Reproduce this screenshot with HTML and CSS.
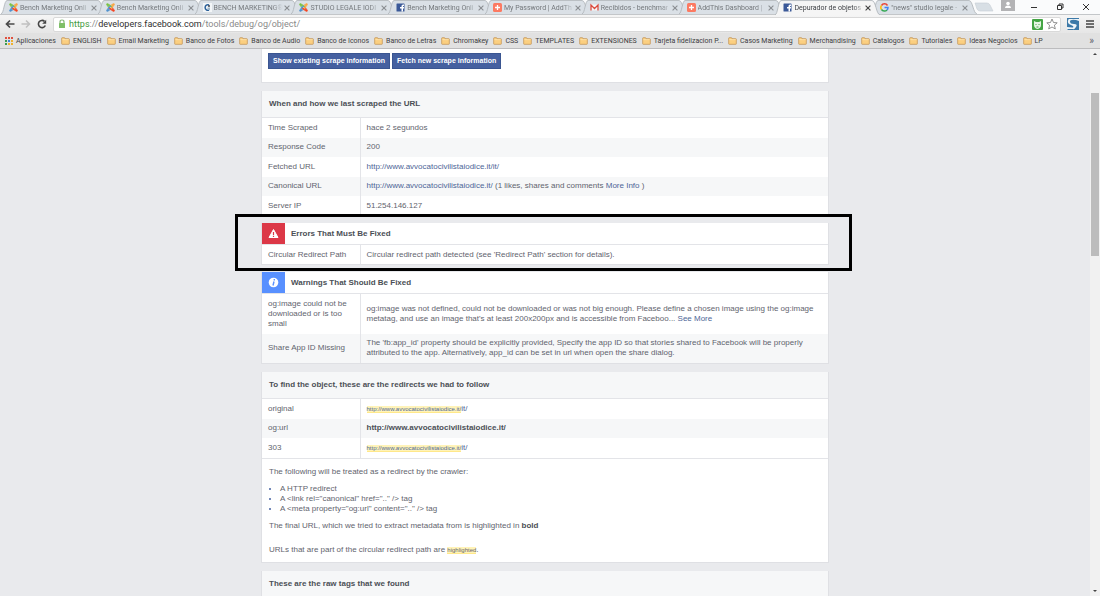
FILE: index.html
```html
<!DOCTYPE html>
<html lang="es">
<head>
<meta charset="utf-8">
<title>Depurador de objetos</title>
<link rel="stylesheet" href="styles.css">
</head>
<body>
<svg class="defs" aria-hidden="true">
  <symbol id="joomla" viewBox="0 0 18 18">
    <path d="M5 8Q3 6 4.500 4.500T8 5l4 4" fill="none" stroke="#7ac143" stroke-width="2.600"/>
    <path d="M10 5q2-2 3.500-.5T13 8l-4 4" fill="none" stroke="#f9a541" stroke-width="2.600"/>
    <path d="M13 10q2 2 .5 3.500T10 13L6 9" fill="none" stroke="#f44321" stroke-width="2.600"/>
    <path d="M8 13q-2 2-3.500.5T5 10l4-4" fill="none" stroke="#5091cd" stroke-width="2.600"/>
    <circle cx="3" cy="3" r="2.400" fill="#7ac143"/><circle cx="15" cy="3" r="2.400" fill="#f9a541"/>
    <circle cx="15" cy="15" r="2.400" fill="#f44321"/><circle cx="3" cy="15" r="2.400" fill="#5091cd"/>
  </symbol>
  <symbol id="fb" viewBox="0 0 18 18">
    <rect x="1" y="1" width="16" height="16" rx="1" fill="#3b5998"/>
    <path d="M11 17v-6H8V8h3V6q0-3 3-3h2v3h-1q-1 0-1 1v1h2v3h-2v6z" fill="#fff"/>
  </symbol>
  <symbol id="addthis" viewBox="0 0 18 18">
    <rect width="18" height="18" rx="3" fill="#fc7a62"/>
    <path d="M9 4v10M4 9h10" stroke="#fff" stroke-width="2.6"/>
  </symbol>
  <symbol id="gmail" viewBox="0 0 18 18">
    <path d="M1 3h16v12H1z" fill="#f5f5f5"/>
    <path d="M2 15V4l7 7 7-7v11" fill="none" stroke="#db4a3d" stroke-width="2.6"/>
  </symbol>
  <symbol id="bench" viewBox="0 0 18 18">
    <rect width="18" height="18" fill="#f3f6f8"/>
    <path d="M12 4A5.500 5.500 0 1 0 12 14" fill="none" stroke="#2a6099" stroke-width="3"/>
    <circle cx="12" cy="6" r="2" fill="#3c4350"/><path d="M9 9h5v5H9z" fill="#9db7cb"/>
  </symbol>
  <symbol id="google" viewBox="0 0 18 18">
    <g fill="none" stroke-width="3"><path d="M15 5A7 7 0 0 0 3 5" stroke="#ea4335"/><path d="M3 5a7 7 0 0 0 0 8" stroke="#fbbc05"/><path d="M3 13a7 7 0 0 0 11 1" stroke="#34a853"/><path d="M14 14q2-2 2-5H9" stroke="#4285f4"/></g>
  </symbol>
  <symbol id="close" viewBox="0 0 10 10"><path d="M2 2l6 6M8 2L2 8" stroke="currentColor" stroke-width="1.400"/></symbol>
  <symbol id="tab" viewBox="0 0 105 14" preserveAspectRatio="none">
    <path d="M0 14C3 13 3 1 6 .5H97C101 1 101 13 105 14" fill="currentColor" stroke="#adb3b8" stroke-width=".8"/>
  </symbol>
  <symbol id="folder" viewBox="0 0 27 24">
    <path d="M2 20V4q0-2 2-2h6q2 0 2 3h11q2 0 2 2v13q0 2-2 2H4q-2 0-2-2z" fill="#fbcf80" stroke="#bd8b4a" stroke-width="2"/>
    <path d="M4 8h19" stroke="#ffecbc" stroke-width="2"/>
  </symbol>
</svg>

<header class="browser">
  <div class="tabstrip">
    <nav class="tabs" aria-label="Pestañas">
      <div class="tab"><svg class="shape"><use href="#tab"/></svg><svg class="fav"><use href="#joomla"/></svg><span>Bench Marketing Onli</span><button aria-label="Cerrar"><svg><use href="#close"/></svg></button></div>
      <div class="tab"><svg class="shape"><use href="#tab"/></svg><svg class="fav"><use href="#joomla"/></svg><span>Bench Marketing Onli</span><button aria-label="Cerrar"><svg><use href="#close"/></svg></button></div>
      <div class="tab"><svg class="shape"><use href="#tab"/></svg><svg class="fav"><use href="#bench"/></svg><span>BENCH MARKETING®</span><button aria-label="Cerrar"><svg><use href="#close"/></svg></button></div>
      <div class="tab"><svg class="shape"><use href="#tab"/></svg><svg class="fav"><use href="#joomla"/></svg><span>STUDIO LEGALE IODI</span><button aria-label="Cerrar"><svg><use href="#close"/></svg></button></div>
      <div class="tab"><svg class="shape"><use href="#tab"/></svg><svg class="fav"><use href="#fb"/></svg><span>Bench Marketing Onli</span><button aria-label="Cerrar"><svg><use href="#close"/></svg></button></div>
      <div class="tab"><svg class="shape"><use href="#tab"/></svg><svg class="fav"><use href="#addthis"/></svg><span>My Password | AddTh</span><button aria-label="Cerrar"><svg><use href="#close"/></svg></button></div>
      <div class="tab"><svg class="shape"><use href="#tab"/></svg><svg class="fav"><use href="#gmail"/></svg><span>Recibidos - benchmar</span><button aria-label="Cerrar"><svg><use href="#close"/></svg></button></div>
      <div class="tab"><svg class="shape"><use href="#tab"/></svg><svg class="fav"><use href="#addthis"/></svg><span>AddThis Dashboard |</span><button aria-label="Cerrar"><svg><use href="#close"/></svg></button></div>
      <div class="tab active"><svg class="shape"><use href="#tab"/></svg><svg class="fav"><use href="#fb"/></svg><span>Depurador de objetos</span><button aria-label="Cerrar"><svg><use href="#close"/></svg></button></div>
      <div class="tab"><svg class="shape"><use href="#tab"/></svg><svg class="fav"><use href="#google"/></svg><span>"news" studio legale -</span><button aria-label="Cerrar"><svg><use href="#close"/></svg></button></div>
    </nav>
    <button class="newtab" aria-label="Nueva pestaña"><svg viewBox="0 0 20 10"><path d="M1 1h12q2 0 3 2l3 6H6Q4 9 3 7z" fill="#d8dfe5" stroke="#c8ced3" stroke-width=".6"/></svg></button>
    <div class="window">
      <button class="user" aria-label="Usuario"><svg viewBox="0 0 14 11"><circle cx="7" cy="3.500" r="1.800" fill="#fff"/><path d="M4 8q0-2.500 3-2.500T10 8z" fill="#fff"/></svg></button>
      <button aria-label="Minimizar"><svg viewBox="0 0 14 14"><path d="M4 7.500h6" stroke="#333"/></svg></button>
      <button aria-label="Restaurar"><svg viewBox="0 0 14 14"><path d="M4.500 5.500h4v4h-4zM6 5V4h4v4H9" fill="none" stroke="#333"/></svg></button>
      <button aria-label="Cerrar ventana"><svg viewBox="0 0 14 14"><path d="M4 4l6 6M10 4l-6 6" stroke="#333"/></svg></button>
    </div>
  </div>
  <div class="toolbar">
    <button aria-label="Atrás"><svg viewBox="0 0 10 10"><path d="M9.500 5H1.500M5 1.500L1.500 5 5 8.500" fill="none" stroke="#4a4a4a" stroke-width="1.700"/></svg></button>
    <button aria-label="Adelante"><svg viewBox="0 0 10 10"><path d="M.5 5h8M5 1.500L8.500 5 5 8.500" fill="none" stroke="#c0c0c0" stroke-width="1.600"/></svg></button>
    <button aria-label="Recargar"><svg viewBox="0 0 10 10"><path d="M8.300 6.500A3.600 3.600 0 1 1 7.500 2.400" fill="none" stroke="#444" stroke-width="1.600"/><path d="M9.200.7v4H5.200z" fill="#444"/></svg></button>
    <div class="omnibox">
      <svg class="lock" viewBox="0 0 8 10"><path d="M2 5V3q0-2 2-2t2 2v2" fill="none" stroke="#86b878" stroke-width="1.200"/><rect x="1" y="4" width="6" height="5" rx=".5" fill="#7fbf68"/></svg>
      <p class="url"><span class="secure">https</span>://<b>developers.facebook.com</b>/tools/debug/og/object/</p>
      <svg class="shield" viewBox="0 0 11 11"><rect width="11" height="11" rx="1" fill="#45a545"/><path d="M2 2l2 1h3l2-1v4Q9 9 5.500 10 2 9 2 6z" fill="#e6f5e4"/><path d="M3.500 5l1 1M7.500 5l-1 1M4.500 8h2" stroke="#45a545"/></svg>
      <svg class="star" viewBox="0 0 12 12"><path d="M6 1l1.500 3.500 3.700.3-2.800 2.400.9 3.700L6 9l-3.300 1.900.9-3.700L.8 4.800l3.700-.3z" fill="#fff" stroke="#777" stroke-width=".8"/></svg>
    </div>
    <button aria-label="Extensión"><svg class="ext" viewBox="0 0 12 12"><rect width="12" height="12" fill="#3c79a8"/><path d="M12 0v3L9 2Q3 1 3 3.500T7 6t2 3-3 2H1l-1 1V9l5 .5Q7 9.500 6 8L2 6Q0 4 1.500 1.500L2 0z" fill="#eef4f8"/><path d="M0 0h12v1H0z" fill="#3c79a8"/></svg></button>
    <button class="menu" aria-label="Menú"><svg viewBox="0 0 10 10"><path d="M1 2h8M1 5h8M1 8h8" stroke="#444" stroke-width="1.600"/></svg></button>
  </div>
  <nav class="bookmarks" aria-label="Marcadores">
    <a href="#"><svg class="apps" viewBox="0 0 8 8"><path d="M0 0h2v2H0zM3 0h2v2H3zM6 0h2v2H6z" fill="#e0503e"/><path d="M0 3h2v2H0z" fill="#3b9a50"/><path d="M3 3h2v2H3z" fill="#4280df"/><path d="M6 3h2v2H6zM3 6h2v2H3zM6 6h2v2H6z" fill="#eeb12f"/><path d="M0 6h2v2H0z" fill="#3b9a50"/></svg>Aplicaciones</a>
    <a href="#"><svg><use href="#folder"/></svg>ENGLISH</a>
    <a href="#"><svg><use href="#folder"/></svg>Email Marketing</a>
    <a href="#"><svg><use href="#folder"/></svg>Banco de Fotos</a>
    <a href="#"><svg><use href="#folder"/></svg>Banco de Audio</a>
    <a href="#"><svg><use href="#folder"/></svg>Banco de Iconos</a>
    <a href="#"><svg><use href="#folder"/></svg>Banco de Letras</a>
    <a href="#"><svg><use href="#folder"/></svg>Chromakey</a>
    <a href="#"><svg><use href="#folder"/></svg>CSS</a>
    <a href="#"><svg><use href="#folder"/></svg>TEMPLATES</a>
    <a href="#"><svg><use href="#folder"/></svg>EXTENSIONES</a>
    <a href="#"><svg><use href="#folder"/></svg>Tarjeta fidelizacion P...</a>
    <a href="#"><svg><use href="#folder"/></svg>Casos Marketing</a>
    <a href="#"><svg><use href="#folder"/></svg>Merchandising</a>
    <a href="#"><svg><use href="#folder"/></svg>Catalogos</a>
    <a href="#"><svg><use href="#folder"/></svg>Tutoriales</a>
    <a href="#"><svg><use href="#folder"/></svg>Ideas Negocios</a>
    <a href="#"><svg><use href="#folder"/></svg>LP</a>
    <button class="more" aria-label="Más marcadores">»</button>
  </nav>
</header>

<div class="viewport">
  <main class="page">
    <section class="card actions">
      <button>Show existing scrape information</button>
      <button>Fetch new scrape information</button>
    </section>

    <section class="card scraped">
      <h2>When and how we last scraped the URL</h2>
      <table>
        <tr><th scope="row">Time Scraped</th><td>hace 2 segundos</td></tr>
        <tr><th scope="row">Response Code</th><td>200</td></tr>
        <tr><th scope="row">Fetched URL</th><td><a href="#">http://www.avvocatocivilistaiodice.it/it/</a></td></tr>
        <tr><th scope="row">Canonical URL</th><td><a href="#">http://www.avvocatocivilistaiodice.it/</a> (1 likes, shares and comments <a href="#">More Info</a> )</td></tr>
        <tr><th scope="row">Server IP</th><td>51.254.146.127</td></tr>
      </table>
    </section>

    <div class="callout">
      <section class="card">
        <h3><svg class="badge error" viewBox="0 0 23 21"><path d="M11.500 6.500L16 14.500H7z" fill="#fff" stroke="#fff" stroke-linejoin="round"/><path d="M11.500 9v3M11.500 12.800v1.200" stroke="#dc3847" stroke-width="1.200"/></svg>Errors That Must Be Fixed</h3>
        <table>
          <tr><th scope="row">Circular Redirect Path</th><td>Circular redirect path detected (see 'Redirect Path' section for details).</td></tr>
        </table>
      </section>
    </div>

    <section class="card">
      <h3><svg class="badge info" viewBox="0 0 23 21"><circle cx="11.500" cy="10.500" r="4.800" fill="#fff"/><path d="M12.300 7v1.500M12 9.500l-1 4" stroke="#5890ff" stroke-width="1.400"/></svg>Warnings That Should Be Fixed</h3>
      <table>
        <tr><th scope="row">og:image could not be downloaded or is too small</th><td>og:image was not defined, could not be downloaded or was not big enough. Please define a chosen image using the og:image metatag, and use an image that's at least 200x200px and is accessible from Faceboo... <a href="#">See More</a></td></tr>
        <tr><th scope="row">Share App ID Missing</th><td>The 'fb:app_id' property should be explicitly provided, Specify the app ID so that stories shared to Facebook will be properly attributed to the app. Alternatively, app_id can be set in url when open the share dialog.</td></tr>
      </table>
    </section>

    <section class="card">
      <h2>To find the object, these are the redirects we had to follow</h2>
      <table>
        <tr><th scope="row">original</th><td><a href="#"><mark>http://www.avvocatocivilistaiodice.it/</mark>it/</a></td></tr>
        <tr><th scope="row">og:url</th><td><strong>http://www.avvocatocivilistaiodice.it/</strong></td></tr>
        <tr><th scope="row">303</th><td><a href="#"><mark>http://www.avvocatocivilistaiodice.it/</mark>it/</a></td></tr>
      </table>
      <div class="notes">
        <p>The following will be treated as a redirect by the crawler:</p>
        <ul>
          <li>A HTTP redirect</li>
          <li>A &lt;link rel="canonical" href=".." /&gt; tag</li>
          <li>A &lt;meta property="og:url" content=".." /&gt; tag</li>
        </ul>
        <p>The final URL, which we tried to extract metadata from is highlighted in <strong>bold</strong></p>
        <p class="last">URLs that are part of the circular redirect path are <mark>highlighted</mark>.</p>
      </div>
    </section>

    <section class="card">
      <h2>These are the raw tags that we found</h2>
    </section>
  </main>
  <div class="scrollbar" aria-hidden="true">
    <svg viewBox="0 0 10 10"><path d="M3 6l2-2 2 2z" fill="#444"/></svg>
    <div class="track"><div class="thumb"></div></div>
    <svg viewBox="0 0 10 10"><path d="M3 4h4L5 6z" fill="#444"/></svg>
  </div>
</div>
</body>
</html>
```
FILE: styles.css
```css
* { box-sizing: border-box; }
body {
  margin: 0;
  height: 100vh;
  display: flex;
  flex-direction: column;
  overflow: hidden;
  font: 8px/10px "Liberation Sans", Arial, sans-serif;
  color: #5f646e;
}
button { margin: 0; padding: 0; border: 0; background: none; font: inherit; color: inherit; }
a { color: #4d6697; text-decoration: none; }
svg { display: block; flex: none; }
.defs { position: absolute; width: 0; height: 0; }

/* Browser frame */
.browser { flex: none; font-family: Roboto, "Open Sans", sans-serif; font-size: 7px; background: #e1e1e1; border-bottom: 1px solid #bcbcbe; }
.tabstrip { display: flex; height: 15px; background: #fafbfc; border-bottom: 1px solid #c3c6c9; }
.tabs { display: grid; grid-template-columns: repeat(10, 1fr); width: 88%; color: #74787c; }
.tab { position: relative; display: flex; align-items: center; gap: 2px; min-width: 0; height: 15px; padding-left: 9px; }
.tab .shape { position: absolute; left: 1px; top: 0; width: 105px; height: 14px; color: #dae0e6; }
.tab .fav { position: relative; width: 9px; height: 9px; }
.tab span { position: relative; flex: 1; overflow: hidden; white-space: nowrap; mask-image: linear-gradient(90deg, #000 85%, transparent); }
.tab button { position: relative; width: 8px; margin: 0 -1px 0 -2px; color: #8b8f93; }
.tab button svg { width: 8px; height: 8px; }
.tab.active { z-index: 1; color: #404347; }
.tab.active .shape { color: #f5f5f5; height: 15px; }
.tab.active button { color: #444; }
.newtab { width: 20px; margin-left: 6px; }
.newtab svg { width: 20px; height: 10px; }
.window { display: flex; flex: 1; justify-content: flex-end; gap: 12px; padding-right: 7px; }
.window svg { width: 14px; height: 14px; }
.window .user { height: 11px; background: #b3b3b5; }
.window .user svg { height: 11px; }

.toolbar { display: flex; align-items: center; gap: 6px; height: 18px; padding: 0 5px; background: linear-gradient(#f5f5f5, #e6e6e6); }
.toolbar button svg { width: 10px; height: 10px; }
.omnibox { display: flex; flex: 1; align-items: center; gap: 3px; height: 15px; padding: 0 2px 0 4px; background: #fff; border: 1px solid #d9d9d9; border-radius: 2px; }
.omnibox .lock { width: 8px; height: 10px; }
.url { flex: 1; margin: 0; font-size: 9px; color: #8a8a8a; }
.url b { font-weight: 400; color: #303030; }
.url .secure { color: #3f9b3c; }
.omnibox .shield { width: 11px; height: 11px; }
.omnibox .star { width: 12px; height: 12px; }
.toolbar button .ext { width: 12px; height: 12px; }

.bookmarks { display: flex; align-items: center; gap: 5px; height: 15px; padding: 0 6px 0 5px; }
.bookmarks a { display: flex; align-items: center; gap: 3px; color: #3d3d3f; white-space: nowrap; }
.bookmarks svg { width: 9px; height: 8px; }
.bookmarks .apps { width: 8px; }
.bookmarks .more { margin-left: auto; font-size: 10px; }

/* Page */
.viewport { display: flex; flex: 1; min-height: 0; overflow: hidden; background: #e9eaed; }
.page { flex: 1; align-self: flex-start; display: flex; flex-direction: column; align-items: center; gap: 8px; }
.card { width: 100%; max-width: 568px; background: #fff; border: 1px solid #dfe0e4; border-top: 0; }
.actions { display: flex; align-items: flex-start; gap: 2px; padding: 4px 6px 13px; }
.actions button { height: 16px; padding: 0 4px; background: #4560a0; border: 1px solid #3a5591; color: #fff; font-size: 7px; font-weight: 700; }

h2, h3 { margin: 0; font-size: 8px; line-height: 10px; color: #4b4f56; border-bottom: 1px solid #e3e4e8; }
h2 { padding: 8px 7px; background: #f6f7f8; }
h3 { display: flex; align-items: center; gap: 6px; }
.badge { width: 23px; height: 21px; }
.error { background: #dc3847; }
.info { background: #5890ff; }

table { width: 100%; border-collapse: collapse; table-layout: fixed; }
th { width: 98px; padding: 5px 6px; text-align: left; font-weight: 400; border-right: 1px solid #e3e4e8; }
td { padding: 5px 3px 5px 6px; }
tr:nth-child(even) { background: #f6f7f8; }
tr:nth-child(even) > * { padding-top: 4px; }
strong { color: #4b4f56; }
mark { font-size: 6px; color: inherit; background: #fff3b8; border-bottom: 1px solid #ffe88a; }

.callout { width: calc(100% - 16px); max-width: 617px; margin: -11px 3px -7px 0; padding: 6px 20px 3px 23px; background: #e9eaed; border: 3px solid #000; }
.callout tr > * { padding-bottom: 4px; }

.notes { padding: 8px 7px 7px; border-top: 1px solid #e3e4e8; }
.notes p { margin: 0; }
.notes ul { margin: 7px 0; padding-left: 11px; }
.notes li::marker { color: #4560a0; }
.notes .last { margin-top: 14px; }

/* Scrollbar */
.scrollbar { display: flex; flex-direction: column; width: 10px; background: #f1f1f1; }
.scrollbar svg { width: 10px; height: 10px; }
.track { flex: 1; padding: 34px 1px 0; }
.thumb { height: 33%; background: #bcbcbc; }
```
